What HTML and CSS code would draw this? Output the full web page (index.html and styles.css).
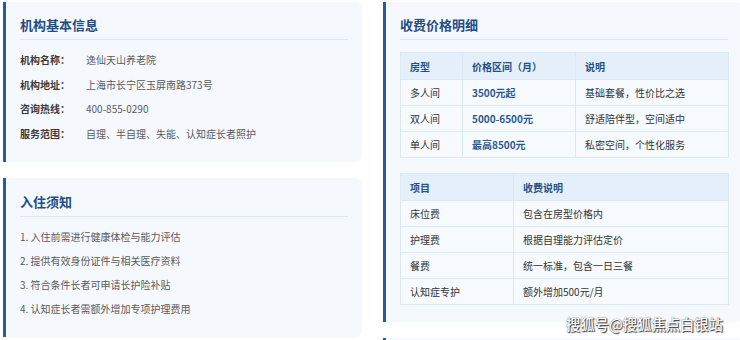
FILE: index.html
```html
<!DOCTYPE html>
<html lang="zh">
<head>
<meta charset="utf-8">
<title>机构信息</title>
<link rel="stylesheet" href="styles.css">
</head>
<body>
<div class="page">
  <div class="col">
    <section class="card card-info">
      <h2 class="card-title">机构基本信息</h2>
      <div class="info-row"><span class="label">机构名称：</span><span class="value">逸仙天山养老院</span></div>
      <div class="info-row"><span class="label">机构地址：</span><span class="value">上海市长宁区玉屏南路373号</span></div>
      <div class="info-row"><span class="label">咨询热线：</span><span class="value">400-855-0290</span></div>
      <div class="info-row"><span class="label">服务范围：</span><span class="value">自理、半自理、失能、认知症长者照护</span></div>
    </section>
    <section class="card card-notice">
      <h2 class="card-title">入住须知</h2>
      <ol class="notice-list">
        <li>1. 入住前需进行健康体检与能力评估</li>
        <li>2. 提供有效身份证件与相关医疗资料</li>
        <li>3. 符合条件长者可申请长护险补贴</li>
        <li>4. 认知症长者需额外增加专项护理费用</li>
      </ol>
    </section>
  </div>
  <div class="col">
    <section class="card card-price">
      <h2 class="card-title">收费价格明细</h2>
      <table class="tbl tbl-rooms">
        <colgroup><col class="c1"><col class="c2"><col class="c3"></colgroup>
        <thead><tr><th>房型</th><th>价格区间（月）</th><th>说明</th></tr></thead>
        <tbody>
          <tr><td>多人间</td><td class="price">3500元起</td><td>基础套餐，性价比之选</td></tr>
          <tr><td>双人间</td><td class="price">5000-6500元</td><td>舒适陪伴型，空间适中</td></tr>
          <tr><td>单人间</td><td class="price">最高8500元</td><td>私密空间，个性化服务</td></tr>
        </tbody>
      </table>
      <table class="tbl tbl-fees">
        <colgroup><col class="d1"><col class="d2"></colgroup>
        <thead><tr><th>项目</th><th>收费说明</th></tr></thead>
        <tbody>
          <tr><td>床位费</td><td>包含在房型价格内</td></tr>
          <tr><td>护理费</td><td>根据自理能力评估定价</td></tr>
          <tr><td>餐费</td><td>统一标准，包含一日三餐</td></tr>
          <tr><td>认知症专护</td><td>额外增加500元/月</td></tr>
        </tbody>
      </table>
    </section>
    <section class="card card-next"></section>
  </div>
</div>
<div class="watermark">搜狐号@搜狐焦点白银站</div>
</body>
</html>
```

FILE: styles.css
```css
html, body {
  margin: 0;
  padding: 0;
  background: #ffffff;
  width: 740px;
  height: 340px;
  overflow: hidden;
  font-family: "Noto Sans CJK SC", "Noto Sans", sans-serif;
  position: relative;
}

.page {
  display: grid;
  grid-template-columns: 359px 359px;
  column-gap: 21px;
  padding: 2px 0 0 3px;
  align-items: start;
}

.col {
  display: flex;
  flex-direction: column;
  gap: 16px;
}

.card {
  background: #f5f9fe;
  border-left: 3px solid #2a5b98;
  border-radius: 0 6px 6px 0;
  padding: 14px 14px 0 14px;
  box-sizing: border-box;
}

.card-title {
  margin: 0;
  font-size: 13px;
  line-height: 18px;
  font-weight: 700;
  color: #1f4d86;
  padding-bottom: 5px;
  border-bottom: 1px solid #dbe7f4;
}

.card-info {
  height: 160px;
}

.info-row {
  display: flex;
  line-height: 24.5px;
  font-size: 10px;
}
.card-info .info-row:first-of-type {
  margin-top: 8px;
}

.label {
  width: 66px;
  font-weight: 700;
  color: #3a3a3a;
}

.value {
  color: #5a5a5a;
}

.card-notice {
  height: 159px;
  padding-top: 15px;
}

.notice-list {
  list-style: none;
  margin: 8px 0 0 0;
  padding: 0;
  font-size: 10px;
  line-height: 24px;
  color: #5a5a5a;
}

.card-price {
  height: 320px;
  padding-top: 14px;
}

.tbl {
  width: 328px;
  border-collapse: collapse;
  table-layout: fixed;
  font-size: 10px;
}
.tbl-rooms { margin-top: 12px; }
.tbl-fees { margin-top: 15px; }

.c1 { width: 62px; }
.c2 { width: 113px; }
.c3 { width: 153px; }
.d1 { width: 113px; }
.d2 { width: 215px; }

.tbl th,
.tbl td {
  border: 1px solid #dbe8f5;
  height: 26px;
  padding: 0 9px;
  text-align: left;
  white-space: nowrap;
  box-sizing: border-box;
}

.tbl th {
  background: #e5effa;
  color: #244f86;
  font-weight: 700;
  height: 27px;
}

.tbl td {
  background: #f7fafe;
  color: #333333;
}

.tbl td.price {
  color: #2a5793;
  font-weight: 700;
}

.card-next {
  height: 2px;
}

.watermark {
  position: absolute;
  left: 566px;
  top: 314px;
  font-size: 14.3px;
  line-height: 20px;
  color: #ffffff;
  font-weight: 500;
  text-shadow: 1px 1px 1px #333, 0 0 1px #444;
  white-space: nowrap;
}
```
